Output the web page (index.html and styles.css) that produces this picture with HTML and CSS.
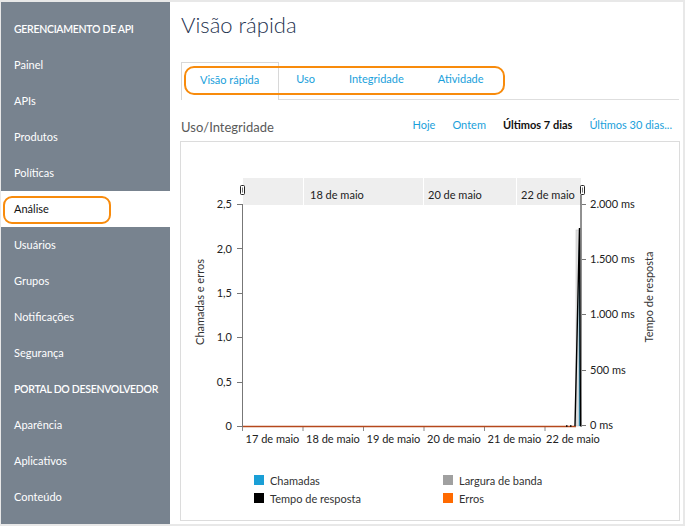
FILE: index.html
```html
<!DOCTYPE html>
<html lang="pt-BR">
<head>
<meta charset="utf-8">
<title>Visão rápida</title>
<link rel="stylesheet" href="styles.css">
</head>
<body>
<div class="frame">
  <nav class="sidebar">
    <div class="nav-item nav-head">GERENCIAMENTO DE API</div>
    <div class="nav-item">Painel</div>
    <div class="nav-item">APIs</div>
    <div class="nav-item">Produtos</div>
    <div class="nav-item">Políticas</div>
    <div class="nav-item active">Análise</div>
    <div class="nav-item">Usuários</div>
    <div class="nav-item">Grupos</div>
    <div class="nav-item">Notificações</div>
    <div class="nav-item">Segurança</div>
    <div class="nav-item nav-head">PORTAL DO DESENVOLVEDOR</div>
    <div class="nav-item">Aparência</div>
    <div class="nav-item">Aplicativos</div>
    <div class="nav-item">Conteúdo</div>
  </nav>
  <main class="main">
    <h1 class="title">Visão rápida</h1>
    <div class="tabs">
      <a class="tab active">Visão rápida</a>
      <a class="tab">Uso</a>
      <a class="tab">Integridade</a>
      <a class="tab">Atividade</a>
    </div>
    <div class="section-head">
      <span class="section-title">Uso/Integridade</span>
      <div class="ranges">
        <a class="range">Hoje</a>
        <a class="range">Ontem</a>
        <span class="range current">Últimos 7 dias</span>
        <a class="range">Últimos 30 dias...</a>
      </div>
    </div>
    <div class="panel">
      <svg class="chart" width="498" height="318" viewBox="181 142 498 318" xmlns="http://www.w3.org/2000/svg">
        <!-- navigator band -->
        <rect x="243" y="178" width="338" height="27" fill="#eeeeee"/>
        <line x1="303.5" y1="178" x2="303.5" y2="205" stroke="#ffffff"/>
        <line x1="423.5" y1="178" x2="423.5" y2="205" stroke="#ffffff"/>
        <line x1="516.5" y1="178" x2="516.5" y2="205" stroke="#ffffff"/>
        <text x="310" y="199">18 de maio</text>
        <text x="428" y="199">20 de maio</text>
        <text x="521" y="199">22 de maio</text>
        <rect x="240.5" y="185.5" width="4" height="9" rx="1" fill="#ffffff" stroke="#222"/>
        <line x1="242.5" y1="187.5" x2="242.5" y2="192.5" stroke="#777"/>
        <rect x="580.5" y="185.5" width="4" height="9" rx="1" fill="#ffffff" stroke="#222"/>
        <line x1="582.5" y1="187.5" x2="582.5" y2="192.5" stroke="#777"/>

        <!-- left axis -->
        <line x1="242.5" y1="204" x2="242.5" y2="427" stroke="#777"/>
        <g stroke="#777">
          <line x1="237" y1="204.5" x2="242" y2="204.5"/>
          <line x1="237" y1="248.5" x2="242" y2="248.5"/>
          <line x1="237" y1="293.5" x2="242" y2="293.5"/>
          <line x1="237" y1="337.5" x2="242" y2="337.5"/>
          <line x1="237" y1="382.5" x2="242" y2="382.5"/>
          <line x1="237" y1="426.5" x2="242" y2="426.5"/>
        </g>
        <g text-anchor="end">
          <text x="232" y="208">2,5</text>
          <text x="232" y="253">2,0</text>
          <text x="232" y="297">1,5</text>
          <text x="232" y="341">1,0</text>
          <text x="232" y="386">0,5</text>
          <text x="232" y="430">0</text>
        </g>
        <text class="axis-title" text-anchor="middle" transform="translate(204 302) rotate(-90)">Chamadas e erros</text>

        <!-- right axis -->
        <line x1="581" y1="195" x2="581" y2="427" stroke="#222"/>
        <g stroke="#777">
          <line x1="582" y1="204.5" x2="586" y2="204.5"/>
          <line x1="582" y1="259.5" x2="586" y2="259.5"/>
          <line x1="582" y1="314.5" x2="586" y2="314.5"/>
          <line x1="582" y1="370.5" x2="586" y2="370.5"/>
          <line x1="582" y1="425.5" x2="586" y2="425.5"/>
        </g>
        <text x="590" y="208">2.000 ms</text>
        <text x="590" y="263">1.500 ms</text>
        <text x="590" y="318">1.000 ms</text>
        <text x="590" y="374">500 ms</text>
        <text x="590" y="429">0 ms</text>
        <text class="axis-title" text-anchor="middle" transform="translate(653 297) rotate(-90)">Tempo de resposta</text>

        <!-- x axis -->
        <g stroke="#888">
          <line x1="242.5" y1="427" x2="242.5" y2="431"/>
          <line x1="303" y1="427" x2="303" y2="431"/>
          <line x1="363.5" y1="427" x2="363.5" y2="431"/>
          <line x1="424" y1="427" x2="424" y2="431"/>
          <line x1="484.5" y1="427" x2="484.5" y2="431"/>
          <line x1="545" y1="427" x2="545" y2="431"/>
        </g>
        <line x1="243" y1="426.5" x2="576" y2="426.5" stroke="#b5481c" stroke-width="1.5"/>
        <g text-anchor="middle">
          <text x="272.5" y="443">17 de maio</text>
          <text x="333" y="443">18 de maio</text>
          <text x="393.5" y="443">19 de maio</text>
          <text x="454" y="443">20 de maio</text>
          <text x="514.5" y="443">21 de maio</text>
          <text x="573" y="443">22 de maio</text>
        </g>

        <!-- spike -->
        <rect x="576" y="230" width="4" height="196" fill="#dedede" stroke="#c4c4c4" stroke-width="0.6"/>
        <line x1="579.3" y1="250" x2="579.3" y2="426" stroke="#1a9fd6" stroke-width="1"/>
        <polyline points="575,426 579.5,228 580.5,426" fill="none" stroke="#000" stroke-width="1.4"/>
        <line x1="566" y1="426" x2="567.5" y2="426" stroke="#000" stroke-width="1.5"/>
        <line x1="570" y1="426" x2="571.5" y2="426" stroke="#000" stroke-width="1.5"/>
      </svg>
      <div class="legend">
        <div class="legend-item"><span class="sw sw-calls"></span>Chamadas</div>
        <div class="legend-item"><span class="sw sw-band"></span>Largura de banda</div>
        <div class="legend-item"><span class="sw sw-time"></span>Tempo de resposta</div>
        <div class="legend-item"><span class="sw sw-err"></span>Erros</div>
      </div>
    </div>
  </main>
  <div class="highlight hl-nav"></div>
  <div class="highlight hl-tabs"></div>
</div>
</body>
</html>
```

FILE: styles.css
```css
* {
  box-sizing: border-box;
}

body {
  margin: 0;
  font-family: Lato, "Open Sans", sans-serif;
  background: #ffffff;
}

.frame {
  position: relative;
  width: 685px;
  height: 526px;
  border: solid #e8e8e8;
  border-width: 2px 2px 2px 1px;
  display: flex;
  background: #ffffff;
}

.sidebar {
  width: 169px;
  flex: none;
  background: #78838f;
  padding-top: 9px;
  color: #ffffff;
}

.nav-item {
  height: 36px;
  line-height: 36px;
  padding-left: 13px;
  font-size: 11px;
  white-space: nowrap;
}

.nav-head {
  font-weight: 600;
  font-size: 10.5px;
  letter-spacing: -0.3px;
}

.nav-item.active {
  background: #ffffff;
  color: #111111;
}

.main {
  flex: 1;
  min-width: 0;
  padding: 0 3px 0 10px;
}

.title {
  margin: 8px 0 0 1px;
  font-size: 22px;
  line-height: 30px;
  font-weight: 300;
  color: #1f3350;
}

.tabs {
  margin: 22px 1px 0 1px;
  height: 38px;
  display: flex;
  align-items: flex-start;
  border-bottom: 1px solid #dedede;
}

.tab {
  height: 37px;
  line-height: 34px;
  padding: 0 17px;
  font-size: 11px;
  color: #1a9fdb;
  cursor: pointer;
}

.tab.active {
  height: 38px;
  padding: 0 19px 0 18px;
  border: 1px solid #d8d8d8;
  border-bottom: none;
  background: #ffffff;
}

.section-head {
  height: 41px;
  margin: 0 1px;
  display: flex;
  align-items: flex-end;
  justify-content: space-between;
  padding-bottom: 5px;
}

.section-title {
  font-size: 13px;
  line-height: 18px;
  color: #5a5a5a;
}

.ranges {
  display: flex;
  gap: 17px;
  padding: 0 7px 2px 0;
}

.range {
  font-size: 11px;
  line-height: 18px;
  color: #1a9fdb;
}

.range.current {
  font-weight: 700;
  color: #111111;
}

.panel {
  height: 380px;
  border: 1px solid #dcdcdc;
}

.chart {
  display: block;
}

.chart text {
  font-family: Lato, "Open Sans", sans-serif;
  font-size: 11px;
  fill: #222222;
}

.chart .axis-title {
  fill: #333333;
}

.legend {
  display: grid;
  grid-template-columns: 189px auto;
  padding: 11px 0 0 73px;
}

.legend-item {
  height: 18px;
  display: flex;
  align-items: center;
  gap: 6px;
  font-size: 11px;
  color: #333333;
}

.sw {
  width: 10px;
  height: 10px;
  flex: none;
}

.sw-calls { background: #1a9fd6; }
.sw-band { background: #a0a0a0; }
.sw-time { background: #000000; }
.sw-err { background: #ff6a00; }

.highlight {
  position: absolute;
  border: 2.5px solid #f88b0c;
  pointer-events: none;
}

.hl-nav {
  left: 2px;
  top: 194px;
  width: 108px;
  height: 28px;
  border-radius: 9px;
}

.hl-tabs {
  left: 183px;
  top: 64px;
  width: 321px;
  height: 29px;
  border-radius: 10px;
}
```
